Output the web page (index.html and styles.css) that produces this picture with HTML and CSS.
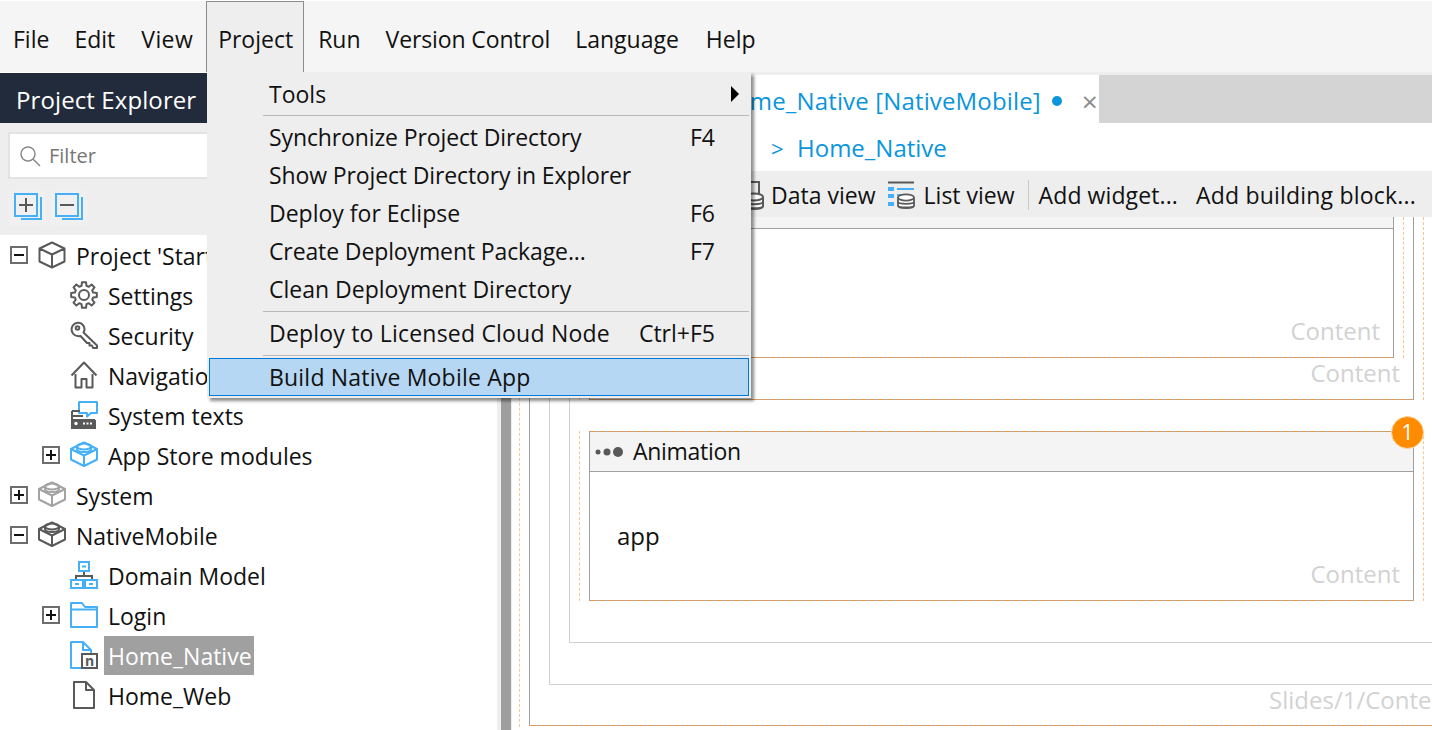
FILE: index.html
```html
<!DOCTYPE html>
<html lang="en">
<head>
	<meta charset="UTF-8">
	<title>Project menu</title>
	<link rel="stylesheet" href="styles.css">
</head>
<body>
	<svg class="defs" width="0" height="0">
		<symbol id="i-cube" viewBox="0 0 28 28"><path d="M14 1.500 26.500 7.500v13L14 26.500 1.500 20.500v-13zM1.500 7.500 14 13.500l12.500-6M14 13.500v13" fill="none" stroke="currentColor" stroke-width="2" stroke-linejoin="round"/></symbol>
		<symbol id="i-gear" viewBox="0 0 28 28"><g fill="none" stroke="currentColor" stroke-width="2" stroke-linejoin="round"><path d="M11.540 4.820 11.970 1.160 16.030 1.160 16.460 4.820 18.750 5.770 21.640 3.490 24.510 6.360 22.230 9.250 23.180 11.540 26.840 11.970 26.840 16.030 23.180 16.460 22.230 18.750 24.510 21.640 21.640 24.510 18.750 22.230 16.460 23.180 16.030 26.840 11.970 26.840 11.540 23.180 9.250 22.230 6.360 24.510 3.490 21.640 5.770 18.750 4.820 16.460 1.160 16.030 1.160 11.970 4.820 11.540 5.770 9.250 3.490 6.360 6.360 3.490 9.250 5.770z"/><circle cx="14" cy="14" r="5"/></g></symbol>
		<symbol id="i-key" viewBox="0 0 28 28"><g fill="none" stroke="currentColor" stroke-width="2" stroke-linejoin="round"><path d="M2.800 4.500C5 1 10 1 12.500 3.500c2.300 2.400 2.400 5.500 1 8L27 24.500V27h-4l-1-2.500h-2.500V22H17l-6.500-7C7 15.500 4.500 14.500 3 12.500 1.300 10 1.500 6.500 2.800 4.500z"/><circle cx="7.500" cy="7" r="1.800"/></g></symbol>
		<symbol id="i-house" viewBox="0 0 28 28"><path d="M1.500 14.500 14 1.500l12.500 13M5.500 13v13.500h6V18h5v8.500h6V13" fill="none" stroke="currentColor" stroke-width="2" stroke-linejoin="round"/></symbol>
		<symbol id="i-texts" viewBox="0 0 28 28"><path d="M9 1h18v11h-6l-4 3.500V12H9z" fill="#fff" stroke="#45b0f7" stroke-width="2" stroke-linejoin="round"/><path d="M2 10h8M2 10v17h23v-8" fill="none" stroke="#595959" stroke-width="2"/><path d="M2 18h23v9H2z" fill="#595959"/><path d="M2 15h11" stroke="#595959" stroke-width="2"/><circle cx="6" cy="22.500" r="1.700" fill="#fff"/><path d="M13 22.500h9" stroke="#fff" stroke-width="2" stroke-dasharray="2 1.500"/></symbol>
		<symbol id="i-block" viewBox="0 0 28 28"><g fill="none" stroke="currentColor" stroke-width="2" stroke-linejoin="round"><path d="M1 8 14 1.500 27 8v10.500L14 25 1 18.500zM1 8l13 6.500L27 8M14 14.500V25"/><ellipse cx="14" cy="5.500" rx="7" ry="3"/><path d="M7 6v2c0 1.700 3 3 7 3s7-1.300 7-3V6"/></g></symbol>
		<symbol id="i-domain" viewBox="0 0 28 28"><g fill="none" stroke="#45b0f7" stroke-width="2"><path d="M14 10v4M6 19v-4h16v4" stroke="#595959"/><path d="M9 1h10v9H9zM1 19h12v8H1zM15 19h12v8H15z"/><path d="M5 23h4M19 23h4M12 5.500h4"/></g></symbol>
		<symbol id="i-folder" viewBox="0 0 28 28"><path d="M1 2h11l3 4h12v20H1zM1 8.500h26" fill="none" stroke="#45b0f7" stroke-width="2" stroke-linejoin="round"/></symbol>
		<symbol id="i-page" viewBox="0 0 28 28"><path d="M4 1h12l8 8v18H4zM16 1v8h8" fill="none" stroke="currentColor" stroke-width="2" stroke-linejoin="round"/></symbol>
		<symbol id="i-db" viewBox="0 0 22 18"><g fill="#fff" stroke="#595959" stroke-width="2"><path d="M2 5v9c0 4 18 4 18 0V5"/><ellipse cx="11" cy="5" rx="9" ry="3.500"/><path d="M2 9.500c0 3.500 18 3.500 18 0M2 14c0 3 18 3 18 0" fill="none"/></g></symbol>
	</svg>

	<div class="app">
		<nav class="menubar">
			<span class="menu-item snug">File</span>
			<span class="menu-item">Edit</span>
			<span class="menu-item wide">View</span>
			<span class="menu-item active">Project</span>
			<span class="menu-item snug run">Run</span>
			<span class="menu-item snug narrow">Version Control</span>
			<span class="menu-item roomy">Language</span>
			<span class="menu-item">Help</span>
		</nav>

		<div class="workspace">
			<aside class="sidebar">
				<header class="sidebar-title">Project Explorer</header>
				<div class="sidebar-tools">
					<div class="filter">
						<svg width="22" height="22" viewBox="0 0 22 22"><circle cx="9" cy="9" r="7" fill="none" stroke="#8a8a8a" stroke-width="1.500"/><path d="m14 14 7 7" stroke="#8a8a8a" stroke-width="1.500"/></svg>
						<span>Filter</span>
					</div>
					<div class="tree-buttons">
						<span class="tree-button"><svg width="30" height="30" viewBox="0 0 30 30"><path d="M28 5v22H8" fill="none" stroke="#45b0f7" stroke-width="2"/><rect x="2" y="2" width="22" height="22" fill="none" stroke="#45b0f7" stroke-width="2"/><path d="M6 13h14M13 6v14" stroke="#595959" stroke-width="2"/></svg></span>
						<span class="tree-button"><svg width="30" height="30" viewBox="0 0 30 30"><path d="M28 5v22H8" fill="none" stroke="#45b0f7" stroke-width="2"/><rect x="2" y="2" width="22" height="22" fill="none" stroke="#45b0f7" stroke-width="2"/><path d="M6 13h14" stroke="#595959" stroke-width="2"/></svg></span>
					</div>
				</div>
				<ul class="tree">
					<li class="row"><span class="exp minus"></span><svg class="ic dark"><use href="#i-cube"/></svg><span>Project 'Starter'</span></li>
					<li class="row sub"><svg class="ic dark"><use href="#i-gear"/></svg><span>Settings</span></li>
					<li class="row sub"><svg class="ic dark"><use href="#i-key"/></svg><span>Security</span></li>
					<li class="row sub"><svg class="ic dark"><use href="#i-house"/></svg><span>Navigation</span></li>
					<li class="row sub"><svg class="ic"><use href="#i-texts"/></svg><span>System texts</span></li>
					<li class="row sub"><span class="exp plus"></span><svg class="ic blue"><use href="#i-block"/></svg><span>App Store modules</span></li>
					<li class="row"><span class="exp plus"></span><svg class="ic pale"><use href="#i-block"/></svg><span>System</span></li>
					<li class="row"><span class="exp minus"></span><svg class="ic dark"><use href="#i-block"/></svg><span>NativeMobile</span></li>
					<li class="row sub"><svg class="ic"><use href="#i-domain"/></svg><span>Domain Model</span></li>
					<li class="row sub"><span class="exp plus"></span><svg class="ic"><use href="#i-folder"/></svg><span>Login</span></li>
					<li class="row sub">
						<span class="page-native"><svg class="ic blue"><use href="#i-page"/></svg><b>n</b></span>
						<span class="selected">Home_Native</span>
					</li>
					<li class="row sub"><svg class="ic dark"><use href="#i-page"/></svg><span>Home_Web</span></li>
				</ul>
			</aside>

			<div class="splitter"></div>

			<main class="editor">
				<div class="tabs">
					<div class="tab">
						<span>Home_Native [NativeMobile]</span>
						<i class="dot"></i>
						<span class="close">×</span>
					</div>
				</div>
				<div class="crumbs"><span class="crumb-sep">&gt;</span><span>Home_Native</span></div>
				<div class="toolbar">
					<svg class="tool-icon" width="22" height="30" viewBox="0 0 22 30"><path d="M6 2h10v12" fill="none" stroke="#595959" stroke-width="2"/><use href="#i-db" y="12" width="22" height="18"/></svg>
					<span>Data view</span>
					<svg class="tool-icon list" width="28" height="28" viewBox="0 0 28 28"><path d="M0 1.500h26" stroke="#595959" stroke-width="2"/><path d="M0 6h6v4H0zM0 13h6v4H0zM0 21h6v4H0z" fill="#45b0f7"/><path d="M9 8h17M9 14h5" stroke="#45b0f7" stroke-width="2"/><use href="#i-db" x="8" y="12" width="20" height="16"/></svg>
					<span>List view</span>
					<i class="tool-sep"></i>
					<span class="wide-half">Add widget...</span>
					<span class="tool-last wide-1">Add building block...</span>
				</div>
				<div class="canvas">
					<div class="frame outer">
						<div class="level first">
							<div class="level second">
								<div class="level third">
									<div class="slot top-slot">
										<div class="slot-box">
											<div class="inner-slot">
												<div class="inner-box">
													<div class="inner-head"></div>
													<div class="hint inner-hint">Content</div>
												</div>
											</div>
											<div class="hint">Content</div>
										</div>
									</div>
									<div class="slot anim-slot">
										<div class="slot-box anim-box">
											<div class="anim-head">
												<svg width="28" height="14" viewBox="0 0 28 14"><circle cx="3" cy="7" r="2.500" fill="#595959"/><circle cx="12" cy="7" r="3.500" fill="#595959"/><circle cx="23" cy="7" r="5" fill="#595959"/></svg>
												<span>Animation</span>
											</div>
											<div class="anim-text">app</div>
											<div class="hint">Content</div>
											<span class="badge">1</span>
										</div>
									</div>
								</div>
							</div>
							<div class="slides-hint">Slides/1/Content</div>
						</div>
					</div>
				</div>
			</main>
		</div>

		<div class="dropdown">
			<div class="dd-row dd-first"><span>Tools</span><i class="arrow"></i></div>
			<hr>
			<div class="dd-row"><span class="narrow">Synchronize Project Directory</span><span>F4</span></div>
			<div class="dd-row"><span class="narrow">Show Project Directory in Explorer</span></div>
			<div class="dd-row"><span>Deploy for Eclipse</span><span>F6</span></div>
			<div class="dd-row"><span class="narrow">Create Deployment Package...</span><span>F7</span></div>
			<div class="dd-row"><span>Clean Deployment Directory</span></div>
			<hr>
			<div class="dd-row"><span class="wide-1">Deploy to Licensed Cloud Node</span><span>Ctrl+F5</span></div>
			<hr>
			<div class="dd-row dd-hot"><span class="wide-1">Build Native Mobile App</span></div>
		</div>
	</div>
</body>
</html>
```

FILE: styles.css
```css
* {
	box-sizing: border-box;
}
html, body {
	margin: 0;
	height: 100%;
	overflow: hidden;
}
body {
	font-family: "Open Sans", "Noto Sans", sans-serif;
	font-size: 23px;
	color: #111;
	background: #fff;
}
.defs {
	position: absolute;
}
.app {
	position: relative;
	width: 1432px;
	height: 730px;
	overflow: hidden;
}
.narrow { letter-spacing: -0.12px; }
.wide { letter-spacing: 0.4px; }
.wide-half { letter-spacing: 0.1px; }
.wide-1 { letter-spacing: 0.2px; }

/* menu bar */
.menubar {
	display: flex;
	height: 72px;
	padding-top: 1px;
	background: #f5f5f5;
	border-top: 1px solid #fff;
}
.menu-item {
	padding: 0 13px;
	line-height: 74px;
	white-space: nowrap;
}
.menu-item.snug {
	padding-right: 12px;
}
.menu-item.roomy {
	padding-right: 14px;
}
.menu-item.run {
	margin-left: 1px;
}
.menu-item.active {
	height: 71px;
	margin-top: -1px;
	padding: 0 10px 0 11px;
	background: #eee;
	border: 1px solid #8c8c8c;
	border-bottom: 0;
}

.workspace {
	display: flex;
	height: 658px;
}

/* project explorer */
.sidebar {
	width: 497px;
	padding-top: 1px;
}
.sidebar-title {
	height: 50px;
	padding-left: 16px;
	font-size: 24px;
	letter-spacing: 0.1px;
	line-height: 53px;
	color: #fff;
	background: #222b3c;
	white-space: nowrap;
}
.sidebar-tools {
	height: 112px;
	padding: 9px 8px 0;
	background: #eee;
}
.filter {
	display: flex;
	align-items: center;
	gap: 8px;
	height: 47px;
	padding-left: 9px;
	font-size: 20px;
	color: #777;
	background: #fff;
	border: 2px solid #e3e3e3;
}
.tree-buttons {
	display: flex;
	gap: 4px;
	margin: 10px 0 0 1px;
}
.tree-button {
	width: 37px;
	height: 37px;
	padding: 3px 0 0 4px;
	background: #f0f0f0;
}
.tree {
	margin: 0;
	padding: 0;
	list-style: none;
}
.row {
	position: relative;
	display: flex;
	align-items: center;
	gap: 10px;
	height: 40px;
	padding: 0 0 0 38px;
	white-space: nowrap;
}
.row > span:last-child {
	padding-top: 2px;
}
.row.sub {
	padding-left: 70px;
}
.ic {
	flex: none;
	width: 28px;
	height: 28px;
}
.dark { color: #595959; }
.blue { color: #45b0f7; }
.pale { color: #a3a3a3; }
.exp {
	position: absolute;
	left: 10px;
	top: 11px;
	width: 18px;
	height: 18px;
	background: #fff;
	border: 2px solid #6d6d6d;
}
.sub .exp {
	left: 42px;
}
.exp::before,
.plus::after {
	content: "";
	position: absolute;
	background: #111;
}
.exp::before {
	left: 2px;
	top: 6px;
	width: 10px;
	height: 2px;
}
.plus::after {
	left: 6px;
	top: 2px;
	width: 2px;
	height: 10px;
}
.page-native {
	position: relative;
	width: 28px;
	height: 28px;
}
.page-native svg {
	margin-left: -3px;
}
.page-native b {
	position: absolute;
	right: 0;
	bottom: 0;
	width: 17px;
	height: 16px;
	font-size: 14px;
	font-weight: 700;
	line-height: 11px;
	text-align: center;
	color: #595959;
	background: #fff;
	border: 2px solid #595959;
}
.row > .selected {
	margin-left: -4px;
	padding: 3px 2px 0 4px;
	line-height: 37px;
	color: #fff;
	background: #a0a0a0;
}
.splitter {
	width: 15px;
	background: #9e9e9e;
	border-left: 4px solid #eee;
	border-right: 1px solid #eee;
}

/* editor */
.editor {
	flex: 1;
	min-width: 0;
	display: flex;
	flex-direction: column;
}
.tabs {
	margin-top: 3px;
	height: 48px;
	background: #d4d4d4;
	box-shadow: 0 -3px 0 #eee;
}
.tab {
	display: flex;
	justify-content: flex-end;
	align-items: center;
	width: 587px;
	height: 48px;
	padding: 3px 1px 0 0;
	font-size: 24px;
	letter-spacing: 0.15px;
	white-space: nowrap;
	color: #0a95dd;
	background: #fff;
}
.dot {
	width: 10px;
	height: 10px;
	margin: 0 20px 0 11px;
	border-radius: 50%;
	background: #0a95dd;
}
.close {
	font-size: 28px;
	line-height: 26px;
	color: #8c8c8c;
}
.crumbs {
	display: flex;
	align-items: center;
	height: 48px;
	padding: 1px 0 0 259px;
	font-size: 24px;
	color: #0a95dd;
}
.crumb-sep {
	width: 26px;
	font-size: 22px;
}
.toolbar {
	display: flex;
	align-items: center;
	justify-content: flex-end;
	height: 46px;
	padding: 2px 16px 0 0;
	background: #eee;
	white-space: nowrap;
}
.tool-icon {
	margin-right: 6px;
}
.tool-icon.list {
	margin: 0 8px 0 12px;
}
.tool-sep {
	width: 1px;
	height: 30px;
	margin: 0 10px 0 13px;
	background: #c8c8c8;
}
.tool-last {
	margin-left: 18px;
}

/* page canvas: nested layout boxes */
.canvas {
	flex: 1;
	min-height: 0;
	padding-left: 7px;
	overflow: hidden;
}
.frame {
	height: 510px;
	padding-left: 9px;
	border-left: 1px dashed #fbc78e;
}
.level {
	padding-left: 19px;
}
.first {
	width: 1100px;
	height: 509px;
	border-left: 1px solid #a0a0a0;
	background: repeating-linear-gradient(90deg, #e39a4f 0 6px, #a9a9a9 6px 9px) bottom / 100% 1px no-repeat;
}
.second {
	height: 468px;
	border-left: 1px solid #d0d0d0;
	border-bottom: 1px solid #d0d0d0;
}
.third {
	height: 426px;
	padding-left: 9px;
	border-left: 1px solid #d0d0d0;
	border-bottom: 1px solid #d0d0d0;
}
.slot {
	width: 845px;
	padding: 0 9px;
	border-left: 1px dashed #fbc78e;
	border-right: 1px dashed #fbc78e;
}
.slot-box {
	position: relative;
	border-left: 1px solid #a0a0a0;
	border-right: 1px solid #a0a0a0;
	background: repeating-linear-gradient(90deg, #e39a4f 0 6px, #a9a9a9 6px 9px) bottom / 100% 1px no-repeat;
}
.top-slot .slot-box {
	height: 183px;
}
.inner-slot {
	height: 141px;
	margin-right: 9px;
	padding-right: 9px;
	border-right: 1px dashed #fbc78e;
}
.inner-box {
	height: 141px;
	border-right: 1px solid #a0a0a0;
	background: repeating-linear-gradient(90deg, #e39a4f 0 6px, #a9a9a9 6px 9px) bottom / 100% 1px no-repeat;
}
.inner-head {
	height: 12px;
	background: #f4f4f4;
	border-bottom: 1px solid #a0a0a0;
}
.hint {
	height: 40px;
	padding-right: 13px;
	font-size: 24px;
	line-height: 29px;
	text-align: right;
	color: #d2d2d2;
}
.inner-hint {
	padding-top: 87px;
	height: 128px;
}
.anim-slot {
	margin-top: 31px;
}
.anim-box {
	height: 170px;
	padding-top: 1px;
	background:
		repeating-linear-gradient(90deg, #e39a4f 0 6px, #a9a9a9 6px 9px) top / 100% 1px no-repeat,
		repeating-linear-gradient(90deg, #e39a4f 0 6px, #a9a9a9 6px 9px) bottom / 100% 1px no-repeat;
}
.anim-head {
	display: flex;
	align-items: center;
	gap: 10px;
	height: 40px;
	padding-left: 5px;
	letter-spacing: -0.3px;
	background: #f4f4f4;
	border-bottom: 1px solid #a0a0a0;
}
.anim-head span {
	margin-top: -2px;
}
.anim-text {
	height: 88px;
	padding: 48px 0 0 27px;
	font-size: 24px;
	line-height: 32px;
}
.anim-box .hint {
	line-height: 28px;
}
.badge {
	position: absolute;
	top: -15px;
	right: -11px;
	width: 33px;
	height: 33px;
	font-size: 21px;
	line-height: 31px;
	text-align: center;
	color: #fff;
	background: #ff8c00;
	border: 1px solid #ffd9a8;
	border-radius: 50%;
}
.slides-hint {
	padding-left: 720px;
	font-size: 24px;
	line-height: 30px;
	color: #d2d2d2;
	white-space: nowrap;
}

/* open Project menu */
.dropdown {
	position: absolute;
	left: 207px;
	top: 72px;
	width: 544px;
	height: 326px;
	padding: 0 2px;
	background: #eee;
	box-shadow: 3px 3px 3px rgba(0, 0, 0, 0.45);
}
.dropdown hr {
	height: 1px;
	margin: 2px 0 3px 54px;
	border: 0;
	background: #b9b9b9;
}
.dd-row {
	display: flex;
	justify-content: space-between;
	align-items: center;
	height: 38px;
	padding: 0 34px 2px 60px;
	white-space: nowrap;
}
.dd-first {
	height: 41px;
	padding: 2px 10px 0 60px;
}
.arrow {
	border-left: 8px solid #000;
	border-top: 8px solid transparent;
	border-bottom: 8px solid transparent;
}
.dd-hot {
	margin-top: -1px;
	padding: 0 34px 0 59px;
	background: #b5d7f3;
	border: 1px solid #0078d7;
}
```
